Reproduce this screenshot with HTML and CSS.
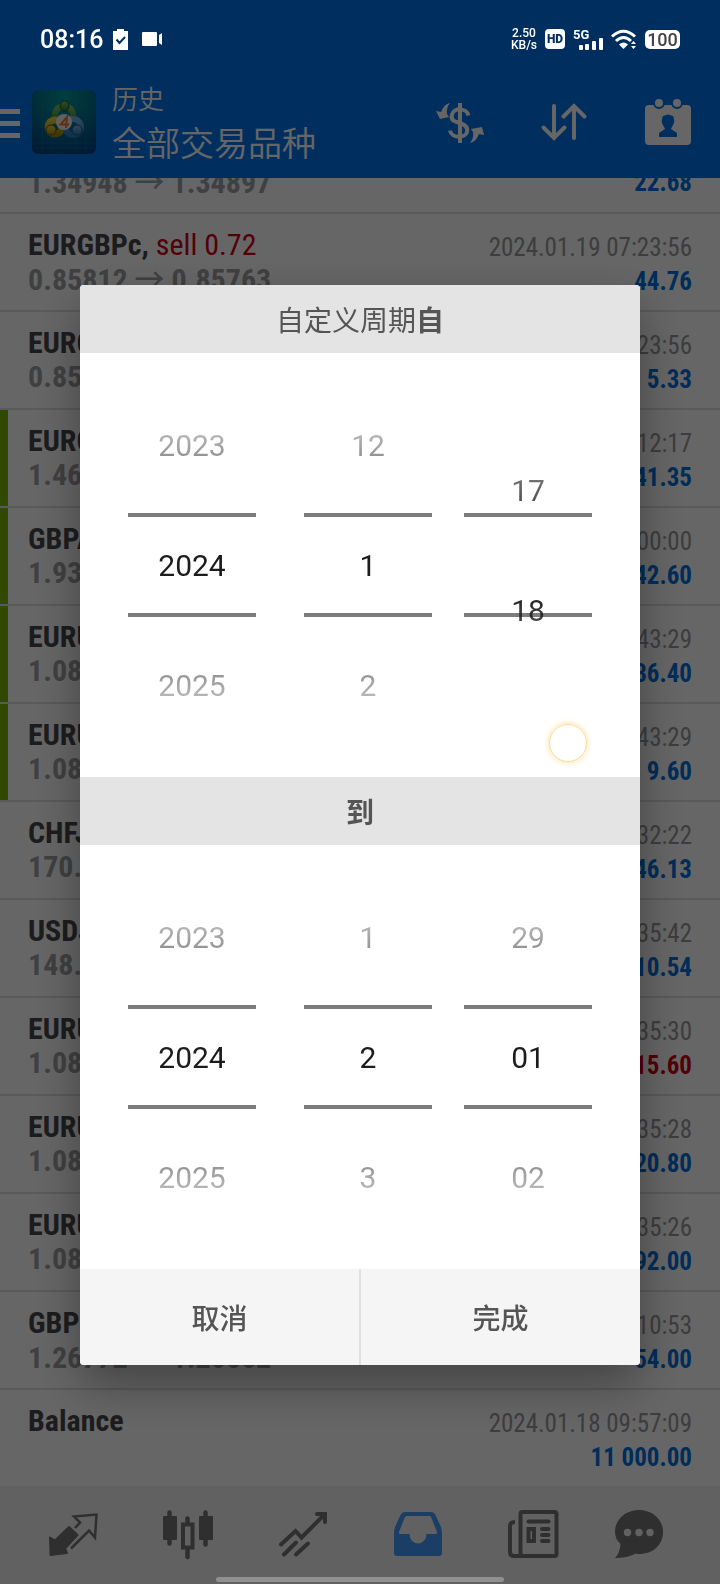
FILE: index.html
```html
<!DOCTYPE html>
<html lang="zh-CN">
<head>
<meta charset="utf-8">
<meta name="viewport" content="width=device-width, initial-scale=1">
<title>历史</title>
<link rel="stylesheet" href="styles.css">
</head>
<body>
<div class="app">
  <header class="header">
    <div class="status">
      <span class="clock">08:16</span>
      <svg class="clip" viewBox="0 0 16 21" width="16" height="21"><path fill="#fff" d="M0 2h4V0h7v2h4v19H0z"/><path d="M3.500 10.500l3 3.500 5.500-6" fill="none" stroke="#002f5f" stroke-width="2"/></svg>
      <svg viewBox="0 0 21 14" width="21" height="14"><rect width="15" height="14" rx="1" fill="#fff"/><path fill="#fff" d="M17 3l3-2v12l-3-2z"/></svg>
      <span class="spacer"></span>
      <span class="rate"><span>2.50</span><span>KB/s</span></span>
      <span class="hd">HD</span>
      <span class="cell"><span class="gen">5G</span>
        <svg viewBox="0 0 24 12" width="24" height="12" fill="#fff"><rect y="7" width="4" height="5" rx="1"/><rect x="6" y="6" width="4" height="6" rx="1"/><rect x="13" y="3" width="4" height="9" rx="1"/><rect x="20" width="4" height="12" rx="1"/></svg></span>
      <svg viewBox="0 0 26 21" width="26" height="21"><g fill="none" stroke="#fff" stroke-width="3"><path d="M1 7.500Q12.500-3 24 7.500"/><path d="M5 12q7.500-7 15 0"/></g><path fill="#fff" d="M8 15.500q4.500-4 9 0L12.500 20z"/><path fill="#fff" d="M20 15l2.500-3 2.500 3zM20 17h5l-2.500 3z"/></svg>
      <span class="battery">100</span>
    </div>
    <div class="toolbar">
      <button class="menu" aria-label="菜单"><i></i><i></i><i></i></button>
      <svg class="logo" viewBox="0 0 64 64" width="64" height="64">
        <defs>
          <radialGradient id="bg" cx=".5" cy=".1" r=".95"><stop offset="0" stop-color="#009c9c"/><stop offset=".5" stop-color="#007090"/><stop offset="1" stop-color="#004484"/></radialGradient>
          <linearGradient id="gg" x2="0" y2="1"><stop stop-color="#7fc060"/><stop offset="1" stop-color="#2c8030"/></linearGradient>
          <linearGradient id="gy" x2="0" y2="1"><stop stop-color="#e8d040"/><stop offset="1" stop-color="#a08a10"/></linearGradient>
          <linearGradient id="gb" x2="0" y2="1"><stop stop-color="#70b8e8"/><stop offset="1" stop-color="#2c78b8"/></linearGradient>
        </defs>
        <rect width="64" height="64" rx="6" fill="url(#bg)"/>
        <path d="M0 53h64M0 58h64M10 0v64M20 0v64M44 0v64M54 0v64" stroke="#50a0d0" stroke-opacity=".15"/>
        <g fill="none" stroke-width="6"><circle cx="32" cy="25" r="9" stroke="url(#gg)"/><circle cx="23" cy="37" r="7" stroke="url(#gy)" stroke-width="7"/><circle cx="41" cy="37" r="8" stroke="url(#gb)"/></g>
        <ellipse cx="32.500" cy="16" rx="4.500" ry="5" fill="url(#gg)" stroke="#205820"/><circle cx="19" cy="40" r="5" fill="url(#gy)" stroke="#605810"/><circle cx="45" cy="40" r="5" fill="url(#gb)" stroke="#205080"/>
        <circle cx="32" cy="32" r="8" fill="#f4f0ec"/><path d="M34 38l1-11-6.500 7.500h8.500" fill="none" stroke="#e87830" stroke-width="2"/>
      </svg>
      <div class="titles"><p class="sub">历史</p><h1 class="title">全部交易品种</h1></div>
      <button class="tool" aria-label="货币"><svg viewBox="0 0 56 56" width="56" height="56"><path fill="#fff" d="M26 9h4v40h-4z"/><path d="M36.500 21.500C35 14 22 13 20 20.500S25 28 28 29s8.500 3 7 9-15.500 7-17-1.500" fill="none" stroke="#fff" stroke-width="4"/><path fill="#fff" d="M4 17l5 1q3-8 9-9-4 5-3 11l2 3-9 2zM52 41l-5-1q-3 8-9 9 4-5 3-11l-2-3 11-2z"/></svg></button>
      <button class="tool" aria-label="排序"><svg viewBox="0 0 56 56" width="56" height="56"><path d="M18 12v32M7.500 33.500L18 44l10.500-10.500M38 44V12M27.500 22.500L38 12l10.500 10.500" fill="none" stroke="#fff" stroke-width="4" stroke-linecap="round"/></svg></button>
      <button class="tool" aria-label="日期"><svg viewBox="0 0 56 56" width="56" height="56"><rect x="5" y="11" width="46" height="40" rx="4" fill="#fff"/><g fill="#fff" stroke="#0076ee" stroke-width="2"><circle cx="19" cy="9" r="5"/><circle cx="37" cy="9" r="5"/></g><path fill="#0076ee" d="M23 22l5-1.500 5 1.500q2.500 5 0 9l-2 4 6 4v4H19v-4l6-4-2-4q-2.500-4 0-9z"/></svg></button>
    </div>
  </header>

  <main class="list">
    <div class="row partial"><p class="price">1.34948 <span class="arrow">→</span> 1.34897</p><p class="sum">22.68</p></div>
    <div class="row"><div><p class="sym">EURGBPc, <span class="sell">sell 0.72</span></p><p class="price">0.85812 <span class="arrow">→</span> 0.85763</p></div><div class="end"><p class="date">2024.01.19 07:23:56</p><p class="sum">44.76</p></div></div>
    <div class="row"><div><p class="sym">EURGBPc</p><p class="price">0.85812</p></div><div class="end"><p class="date">2024.01.19 07:23:56</p><p class="sum">5.33</p></div></div>
    <div class="row marked"><div><p class="sym">EURCADc</p><p class="price">1.46812</p></div><div class="end"><p class="date">2024.01.19 04:12:17</p><p class="sum">41.35</p></div></div>
    <div class="row marked"><div><p class="sym">GBPAUDc</p><p class="price">1.93122</p></div><div class="end"><p class="date">2024.01.19 04:00:00</p><p class="sum">42.60</p></div></div>
    <div class="row marked"><div><p class="sym">EURUSDc</p><p class="price">1.08812</p></div><div class="end"><p class="date">2024.01.19 03:43:29</p><p class="sum">36.40</p></div></div>
    <div class="row marked"><div><p class="sym">EURUSDc</p><p class="price">1.08812</p></div><div class="end"><p class="date">2024.01.19 03:43:29</p><p class="sum">9.60</p></div></div>
    <div class="row"><div><p class="sym">CHFJPYc</p><p class="price">170.122</p></div><div class="end"><p class="date">2024.01.19 03:32:22</p><p class="sum">46.13</p></div></div>
    <div class="row"><div><p class="sym">USDJPYc</p><p class="price">148.122</p></div><div class="end"><p class="date">2024.01.18 15:35:42</p><p class="sum">10.54</p></div></div>
    <div class="row"><div><p class="sym">EURUSDc</p><p class="price">1.08812</p></div><div class="end"><p class="date">2024.01.18 15:35:30</p><p class="sum loss">-15.60</p></div></div>
    <div class="row"><div><p class="sym">EURUSDc</p><p class="price">1.08812</p></div><div class="end"><p class="date">2024.01.18 15:35:28</p><p class="sum">20.80</p></div></div>
    <div class="row"><div><p class="sym">EURUSDc</p><p class="price">1.08812</p></div><div class="end"><p class="date">2024.01.18 15:35:26</p><p class="sum">92.00</p></div></div>
    <div class="row"><div><p class="sym">GBPUSDc</p><p class="price">1.26772 <span class="arrow">→</span> 1.26662</p></div><div class="end"><p class="date">2024.01.18 15:10:53</p><p class="sum">54.00</p></div></div>
    <div class="row"><div><p class="sym">Balance</p></div><div class="end"><p class="date">2024.01.18 09:57:09</p><p class="sum">11 000.00</p></div></div>
  </main>

  <nav class="nav">
    <a href="#quotes" aria-label="行情"><svg viewBox="0 0 56 56" width="56" height="56"><path fill="currentColor" stroke="currentColor" stroke-width="2" stroke-linejoin="round" d="M5 30.500l5 3L24 20l8.500 8-12.500 13.500 2 4.500-16.500 2z"/><path d="M26 41.500l18-18 6 7L51.500 7.500 29 9.500l6 6-5 5.500" fill="none" stroke="currentColor" stroke-width="2.500"/></svg></a>
    <a href="#charts" aria-label="图表"><svg viewBox="0 0 56 56" width="56" height="56"><g fill="currentColor"><rect x="3" y="9" width="14" height="24" rx="1"/><rect x="39" y="9" width="14" height="24" rx="1"/></g><path d="M9.500 5.500v31M45.500 5.500v32M27.500 11.500v5M27.500 42v8" stroke="currentColor" stroke-width="4.500" stroke-linecap="round"/><rect x="23" y="17.500" width="9.500" height="23" fill="none" stroke="currentColor" stroke-width="4"/></svg></a>
    <a href="#trade" aria-label="交易"><svg viewBox="0 0 56 56" width="56" height="56"><path d="M6 37.500l14.500-13.500 6 6.500L50 7M42 7h8v8M21 35.500l-12 12M33 36.500L21 47.500" fill="none" stroke="currentColor" stroke-width="4" stroke-linecap="round"/></svg></a>
    <a href="#history" class="current" aria-label="历史"><svg viewBox="0 0 56 56" width="56" height="56"><path fill="currentColor" fill-rule="evenodd" d="M15 5h26q3 0 4.500 3L51 20q1 3 1 7v19q0 3-3 3H7q-3 0-3-3V27q0-4 1-7L10.500 8Q12 5 15 5zM16.500 9q-1.500 0-2 2L9 25q-.5 2 1.500 2h9a8.500 9.500 0 0 0 17 0h9q2 0 1.500-2L41.500 11q-.5-2-2-2z"/></svg></a>
    <a href="#news" aria-label="新闻"><svg viewBox="0 0 56 56" width="56" height="56"><g fill="none" stroke="currentColor" stroke-width="4"><rect x="15.500" y="5" width="36" height="44" rx="2"/><path d="M10 15q-5 0-5 4v26q0 4 4 4h10"/><rect x="23.500" y="22" width="5.500" height="12"/><path stroke-linecap="round" d="M23.500 14.500h20M37 22h6.500M37 28h6.500M37 34h6.500"/></g></svg></a>
    <a href="#chat" aria-label="消息"><svg viewBox="0 0 56 56" width="56" height="56"><path fill="currentColor" d="M28 3c13 0 24 9 24 22S42 47 28 47q-1.500 0-3-.5Q16 51 4 51q5-5 5.500-14Q4 32 4 25C4 12 15 3 28 3z"/><g fill="#f3f3f3"><circle cx="16.500" cy="25.500" r="3.700"/><circle cx="28" cy="25.500" r="3.700"/><circle cx="39" cy="25.500" r="3.700"/></g></svg></a>
  </nav>
</div>

<div class="scrim">
  <form class="dialog" role="dialog" aria-label="自定义周期">
    <h2 class="band">自定义周期<b>自</b></h2>
    <div class="pickers">
      <div class="wheel"><div class="items"><button type="button">2023</button><input aria-label="起始年" value="2024"><button type="button">2025</button></div></div>
      <div class="wheel"><div class="items"><button type="button">12</button><input aria-label="起始月" value="1"><button type="button">2</button></div></div>
      <div class="wheel"><div class="items dragged"><button type="button">17</button><input aria-label="起始日" value="18"></div></div>
      <i class="touch"></i>
    </div>
    <h2 class="band"><b>到</b></h2>
    <div class="pickers">
      <div class="wheel"><div class="items"><button type="button">2023</button><input aria-label="结束年" value="2024"><button type="button">2025</button></div></div>
      <div class="wheel"><div class="items"><button type="button">1</button><input aria-label="结束月" value="2"><button type="button">3</button></div></div>
      <div class="wheel"><div class="items"><button type="button">29</button><input aria-label="结束日" value="01"><button type="button">02</button></div></div>
    </div>
    <div class="actions"><button type="button">取消</button><button type="button">完成</button></div>
  </form>
</div>
<div class="home"></div>
</body>
</html>
```
FILE: styles.css
```css
* { box-sizing: border-box; }
body, p, h1, h2 { margin: 0; }
body { font-family: Roboto, "Noto Sans CJK SC", sans-serif; background: #fff; }
button, input { font: inherit; color: inherit; border: 0; padding: 0; background: none; }
svg { display: block; flex: none; }

.app { display: flex; flex-direction: column; height: 100vh; }

.header { background: #0076ee; color: #fff; }
.status {
  position: relative; z-index: 3;
  display: flex; align-items: center; gap: 8px;
  height: 78px; padding: 0 40px;
}
.clock { font-size: 25px; font-weight: 500; margin-right: 2px; }
.clip { margin-right: 5px; }
.spacer { flex: 1; }
.rate { display: flex; flex-direction: column; font-size: 12px; line-height: 12px; text-align: center; font-weight: 500; }
.hd { width: 20px; height: 20px; border-radius: 4px; background: #fff; color: #002f5f; font-size: 12px; line-height: 20px; font-weight: 900; text-align: center; }
.cell { display: grid; height: 21px; width: 30px; }
.cell > * { grid-area: 1 / 1; }
.cell svg { place-self: end; }
.gen { font-size: 13px; line-height: 12px; font-weight: 700; }
.battery { width: 35px; height: 19px; border-radius: 5px; background: #fff; color: #444; font-size: 18px; line-height: 20px; font-weight: 500; text-align: center; }

.toolbar { display: flex; align-items: center; height: 100px; padding: 0 24px 12px 0; }
.menu { display: grid; gap: 7px; width: 20px; padding-top: 2px; }
.menu i { height: 5px; background: #fff; }
.logo { margin: 0 16px 0 12px; }
.titles { flex: 1; padding-top: 4px; }
.sub { font-size: 26px; line-height: 40px; font-weight: 350; }
.title { font-size: 34px; line-height: 48px; font-weight: 350; white-space: nowrap; }
.tool { margin-left: 48px; }

.list {
  flex: 1; min-height: 0; overflow: hidden;
  display: flex; flex-direction: column; justify-content: flex-end;
  font-family: "Roboto Condensed", "Liberation Sans Narrow", Roboto, sans-serif;
}
.row {
  display: flex; justify-content: space-between; flex: none;
  height: 98px; padding: 14px 28px 0;
  border-bottom: 2px solid #e0e0e0;
}
.row:last-child { height: 96px; border-bottom: 0; }
.partial { align-items: flex-end; padding-bottom: 12px; }
.marked { background: linear-gradient(#78b400, #78b400) no-repeat 0 0 / 8px 100%; }
.sym, .price { font-size: 30px; line-height: 34px; font-weight: 700; white-space: nowrap; }
.sym { color: #48484c; }
.sell { color: #d00018; font-weight: 400; }
.price { color: #a0a0a4; }
.arrow { font-family: "Noto Sans CJK SC", sans-serif; line-height: 30px; font-weight: 500; }
.end { text-align: right; padding-top: 3px; }
.date, .sum { line-height: 34px; white-space: nowrap; }
.date { font-size: 25px; color: #98989c; }
.sum { font-size: 25px; color: #0070e0; font-weight: 700; }
.loss { color: #d00018; }

.nav {
  display: grid; grid-template-columns: repeat(5, 115fr) 98fr;
  height: 98px; padding: 0 32px 0 15px; background: #f3f3f3;
}
.nav a { display: grid; place-items: center; color: #757575; }
.nav .current { color: #449bff; }

.scrim {
  position: fixed; inset: 0; z-index: 2;
  display: grid; place-items: center;
  padding: 66px 80px 0; background: rgba(0, 0, 0, .6);
}
.dialog {
  width: 100%; border-radius: 4px; overflow: hidden; background: #fff; color: #555;
  box-shadow: 0 20px 48px rgba(0, 0, 0, .35);
}
.band, .actions { font-family: "Noto Sans CJK SC", sans-serif; font-size: 28px; }
.band { line-height: 68px; font-weight: 400; text-align: center; background: #e4e4e4; }
.band b { font-weight: 700; }
.pickers {
  position: relative; display: grid;
  grid-template-columns: 144px 128px 128px; column-gap: 32px;
  padding: 32px 48px;
}
.wheel { position: relative; height: 360px; }
.wheel:first-child { width: 128px; }
.wheel::before {
  content: ""; position: absolute; inset: 128px 0;
  border: solid #7c7c7c; border-width: 4px 0;
}
.items {
  position: relative; display: flex; flex-direction: column;
  height: 360px; color: #1c1c1e; font-size: 30px;
  -webkit-mask-image: linear-gradient(transparent, #000 42%, #000 58%, transparent);
  mask-image: linear-gradient(transparent, #000 42%, #000 58%, transparent);
}
.items > * { width: 100%; height: 120px; padding-top: 1px; flex: none; text-align: center; }
.dragged { padding-top: 45px; }
.touch {
  position: absolute; left: 469px; top: 371px; width: 38px; height: 38px;
  border-radius: 50%; border: 1px solid #fbdc98; box-shadow: 0 0 6px #fbdc98;
}
.actions { display: flex; background: #f5f5f5; font-weight: 500; }
.actions button { flex: 1; height: 96px; }
.actions button + button { border-left: 2px solid #e0e0e0; }

.home { position: fixed; z-index: 3; bottom: 2px; left: 30%; right: 30%; height: 5px; border-radius: 3px; background: #909090; }
```
